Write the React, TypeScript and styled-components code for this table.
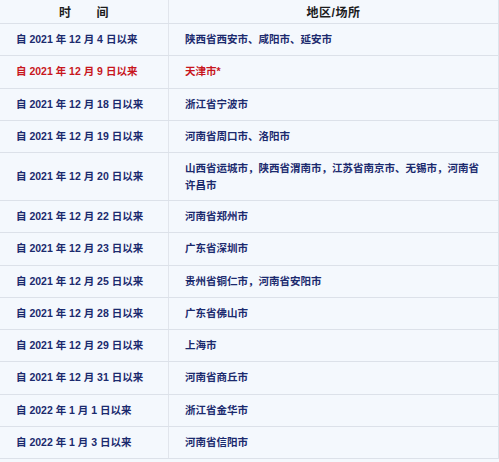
import { createGlobalStyle, styled } from "styled-components"

const GlobalStyle = createGlobalStyle`
  html, body {
    margin: 0;
    padding: 0;
    background: #f4f8fd;
  }
  body {
    font-family: "Liberation Sans", "Noto Sans CJK SC", sans-serif;
  }
`

type Row = { date: string; place: string; hot?: boolean; tall?: boolean }

const rows: Row[] = [
  { date: "自 2021 年 12 月 4 日以来", place: "陕西省西安市、咸阳市、延安市" },
  { date: "自 2021 年 12 月 9 日以来", place: "天津市*", hot: true },
  { date: "自 2021 年 12 月 18 日以来", place: "浙江省宁波市" },
  { date: "自 2021 年 12 月 19 日以来", place: "河南省周口市、洛阳市" },
  {
    date: "自 2021 年 12 月 20 日以来",
    place: "山西省运城市，陕西省渭南市，江苏省南京市、无锡市，河南省许昌市",
    tall: true,
  },
  { date: "自 2021 年 12 月 22 日以来", place: "河南省郑州市" },
  { date: "自 2021 年 12 月 23 日以来", place: "广东省深圳市" },
  { date: "自 2021 年 12 月 25 日以来", place: "贵州省铜仁市，河南省安阳市" },
  { date: "自 2021 年 12 月 28 日以来", place: "广东省佛山市" },
  { date: "自 2021 年 12 月 29 日以来", place: "上海市" },
  { date: "自 2021 年 12 月 31 日以来", place: "河南省商丘市" },
  { date: "自 2022 年 1 月 1 日以来", place: "浙江省金华市" },
  { date: "自 2022 年 1 月 3 日以来", place: "河南省信阳市" },
]

function App() {
  return (
    <>
      <GlobalStyle />
      <Table>
        <HeadRow>
          <HeadCell>时　　间</HeadCell>
          <HeadCell>地区/场所</HeadCell>
        </HeadRow>
        {rows.map((r) => (
          <BodyRow key={r.date} $tall={r.tall}>
            <Cell $hot={r.hot}>{r.date}</Cell>
            <Cell $hot={r.hot}>{r.place}</Cell>
          </BodyRow>
        ))}
      </Table>
    </>
  )
}

const Table = styled.div`
  width: 498px;
  border-right: 1px solid #dde2ea;
  background: #f4f8fd;
`

const HeadRow = styled.div`
  display: grid;
  grid-template-columns: 168px 1fr;
  height: 24px;
  box-sizing: border-box;
  border-bottom: 1px solid #dce1e9;
`

const HeadCell = styled.div`
  display: flex;
  align-items: center;
  justify-content: center;
  font-size: 12px;
  letter-spacing: 0.5px;
  font-weight: bold;
  color: #1c1c1c;
  & + & {
    border-left: 1px solid #e1e5ec;
  }
`

const BodyRow = styled.div<{ $tall?: boolean }>`
  display: grid;
  grid-template-columns: 168px 1fr;
  height: ${(p) => (p.$tall ? "48px" : "32.25px")};
  box-sizing: border-box;
  border-bottom: 1px solid #dce1e9;
`

const Cell = styled.div<{ $hot?: boolean }>`
  display: flex;
  align-items: center;
  padding: 0 12px 0 16px;
  font-size: 10.5px;
  line-height: 17px;
  font-weight: bold;
  color: ${(p) => (p.$hot ? "#c8161d" : "#1b2a6e")};
  & + & {
    border-left: 1px solid #e1e5ec;
  }
`

export default App
